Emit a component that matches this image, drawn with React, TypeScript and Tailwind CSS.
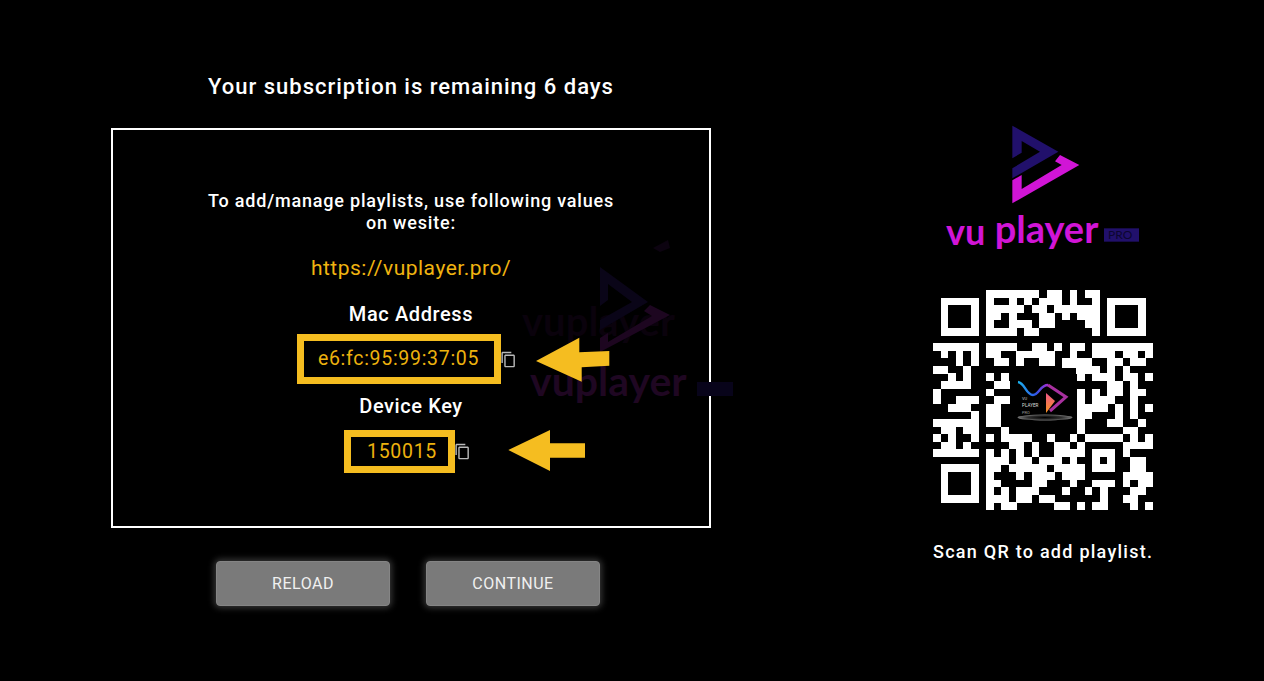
import { MdOutlineContentCopy } from 'react-icons/md';

const QR_ROWS = [
  '.......#######.##.#.##.......',
  '.#####.#..#.#.###.#..#.#####.',
  '.#...#.#####.##.######.#...#.',
  '.#...#.##.#...##.#.###.#...#.',
  '.#...#.#..###.##....##.#...#.',
  '.#####.####.##.......#.#####.',
  '.............................',
  '######.####..##.#.##.########',
  '.#.#.#.##..#####..#..###.##.#',
  '...#.#..##.#..##.####..##.##.',
  '##..#............#####.#.#...',
  '..#.#..#.#.........#.###.##.#',
  '.####...###............##.#..',
  '#......#...........#.#.##.##.',
  '#..###..###........#.###..#..',
  '..###..##..........####.#.#.#',
  '.....#.##..........##...#.#..',
  '######.##..........#...##..#.',
  '.##.##...#.........#.....##..',
  '#.#..#.#.####..#..#.#####.#.#',
  '.##.#.....##.#..##.#.....####',
  '######.#.#.#.#..####.###.#...',
  '.......###.##.###.#..#.#..##.',
  '.#####.##.#####.####.###..##.',
  '.#...#.#...#.###.###.....####',
  '.#...#.##....##...#..###.#.##',
  '.#...#.#.#.###...#..#.#...##.',
  '.#####.###.##.##......#..##..',
  '.......#.##.....##.#.##...#.#',
];

function Logo() {
  return (
    <svg viewBox="0 0 660 420" className="-ml-[3px] h-[140px] w-[220px]">
      <path d="M247 32 L385 110 L247 190 V160 L330 110 L275 78 V113 L247 130 Z" fill="#21106b" />
      <path d="M390 120 L448 150 L247 265 V196 L275 180 V222 L395 150 L375 139 Z" fill="#d115d6" />
      <text x="48" y="389" fontSize="108" fontWeight="700" fill="#d115d6" fontFamily="Lato, sans-serif">vu</text>
      <text x="194" y="384" fontSize="114" fontWeight="700" fill="#d115d6" fontFamily="Lato, sans-serif">player</text>
      <rect x="522" y="340" width="105" height="40" fill="#21106b" />
      <text x="534" y="373" fontSize="36" fill="#0c0630" fontFamily="Lato, sans-serif">PRO</text>
    </svg>
  );
}

function QrCode() {
  return (
    <div className="relative h-[220px] w-[220px]">
      <svg viewBox="0 0 29 29" shapeRendering="crispEdges" className="h-full w-full">
        {QR_ROWS.map((row, y) =>
          row.split('').map((cell, x) =>
            cell === '#' ? <rect key={`${x}-${y}`} x={x} y={y} width="1.02" height="1.02" fill="#fff" /> : null,
          ),
        )}
      </svg>
      <div className="absolute left-[77px] top-[78px] h-[64px] w-[66px] bg-black">
        <svg viewBox="0 0 66 64" className="h-full w-full">
          <defs>
            <linearGradient id="wave" x1="0" x2="1">
              <stop offset="0" stopColor="#1ab4ee" />
              <stop offset="0.6" stopColor="#2f55e6" />
              <stop offset="1" stopColor="#a52bd0" />
            </linearGradient>
            <linearGradient id="play" x1="0" x2="0" y1="0" y2="1">
              <stop offset="0" stopColor="#f0568a" />
              <stop offset="1" stopColor="#f7941d" />
            </linearGradient>
            <radialGradient id="shadow">
              <stop offset="0" stopColor="#000" />
              <stop offset="0.6" stopColor="#2e2e2e" />
              <stop offset="1" stopColor="#777" />
            </radialGradient>
          </defs>
          <path d="M8 14 C15 15 16 27 23 27 C29 27 30 17 38 17" stroke="url(#wave)" strokeWidth="2.4" fill="none" />
          <path d="M38 17 L56 29 L40 43" stroke="#a8309f" strokeWidth="3" fill="none" />
          <path d="M36 25 L45 33 L36 45 Z" fill="url(#play)" />
          <text x="12" y="32" fontSize="4" fill="#ccc" fontFamily="Roboto, sans-serif">VU</text>
          <text x="12" y="38.5" fontSize="4.6" fill="#ddd" fontFamily="Roboto, sans-serif">PLAYER</text>
          <text x="12" y="46" fontSize="4" fill="#999" fontFamily="Roboto, sans-serif">PRO</text>
          <ellipse cx="35" cy="49.5" rx="27.5" ry="3" fill="url(#shadow)" />
        </svg>
      </div>
    </div>
  );
}

function BoxOverlay() {
  return (
    <svg viewBox="500 230 250 250" className="pointer-events-none absolute left-[387px] top-[100px] h-[250px] w-[250px]">
      {/* faint watermark behind the values */}
      <text x="522" y="336" fontSize="40" fontWeight="700" fill="#0a020c" fontFamily="Lato, sans-serif">vuplayer</text>
      <path d="M600 267 L648 302 L600 330 V320 L632 302 L608 284 V300 L600 306 Z" fill="#0a0518" />
      <path d="M650 305 L670 315 L600 352 V338 L608 333 V342 L652 316 L644 311 Z" fill="#1d0620" />
      <path d="M653 248 L668 240 L670 248 L660 252 Z" fill="#0c0310" />
      <text x="530" y="396" fontSize="41" fontWeight="700" fill="#1f0722" fontFamily="Lato, sans-serif">vuplayer</text>
      <rect x="697" y="382" width="36" height="14" fill="#08041a" />
      {/* arrows */}
      <path d="M536 361 L579.3 337.7 L579.3 352.3 L609.3 351 L609.3 365.7 L581.7 367.3 L581.7 381.7 Z" fill="#f5bd20" />
      <path d="M508.3 450 L550 430 V443.3 H585 V457.7 H550 V471 Z" fill="#f5bd20" />
    </svg>
  );
}

function ValueRow({ value, frameClass }: { value: string; frameClass: string }) {
  return (
    <div className="flex items-center">
      <div className={`flex items-center justify-center border-[7.5px] border-[#f5bd20] text-[19.5px] tracking-[0.7px] text-[#edb20e] ${frameClass}`}>
        {value}
      </div>
      <MdOutlineContentCopy className="-ml-[1px] h-[17px] w-[17px] text-[#b9b9b9]" />
    </div>
  );
}

function ActionButton({ label }: { label: string }) {
  return (
    <button className="h-[45px] w-[174px] rounded-[4px] border border-[#858585] bg-[#7a7a7a] text-[16px] tracking-[0.5px] text-[#f0f0f0] shadow-[0_0_6px_2px_rgba(110,110,110,0.5)]">
      {label}
    </button>
  );
}

export default function App() {
  return (
    <main className="flex h-[681px] overflow-hidden bg-black font-['Roboto',sans-serif] text-white">
      <section className="ml-[111px] flex w-[600px] flex-col items-center pt-[73px]">
        <h1 className="text-center text-[22px] font-medium leading-[28px] tracking-[1px]">
          Your subscription is remaining 6 days
        </h1>

        <div className="relative mt-[27px] flex h-[400px] w-[600px] flex-col items-center border-2 border-white pt-[60px]">
          <BoxOverlay />
          <p className="relative whitespace-nowrap text-center text-[18px] font-medium leading-[22px] tracking-[0.8px]">
            To add/manage playlists, use following values
            <br />
            on wesite:
          </p>
          <p className="relative mt-[21px] text-[21px] leading-[26px] tracking-[0.5px] text-[#f0b410]">
            https://vuplayer.pro/
          </p>
          <p className="relative mt-[21px] text-[20px] font-medium leading-[24px] tracking-[0.6px]">Mac Address</p>
          <div className="relative mt-[8px] -ml-[9px]">
            <ValueRow value="e6:fc:95:99:37:05" frameClass="h-[50px] w-[204px]" />
          </div>
          <p className="relative mt-[10px] text-[20px] font-medium leading-[24px] tracking-[0.6px]">Device Key</p>
          <div className="relative mt-[12px] -ml-[8px]">
            <ValueRow value="150015" frameClass="h-[43px] w-[111px] pl-[6px]" />
          </div>
        </div>

        <div className="-ml-[6px] mt-[33px] flex gap-[36px]">
          <ActionButton label="RELOAD" />
          <ActionButton label="CONTINUE" />
        </div>
      </section>

      <aside className="ml-[222px] flex w-[220px] flex-col items-start pt-[115px]">
        <Logo />
        <div className="mt-[35px]">
          <QrCode />
        </div>
        <p className="mt-[30px] w-full whitespace-nowrap text-center text-[18px] font-medium leading-[24px] tracking-[1.25px]">
          Scan QR to add playlist.
        </p>
      </aside>
    </main>
  );
}
